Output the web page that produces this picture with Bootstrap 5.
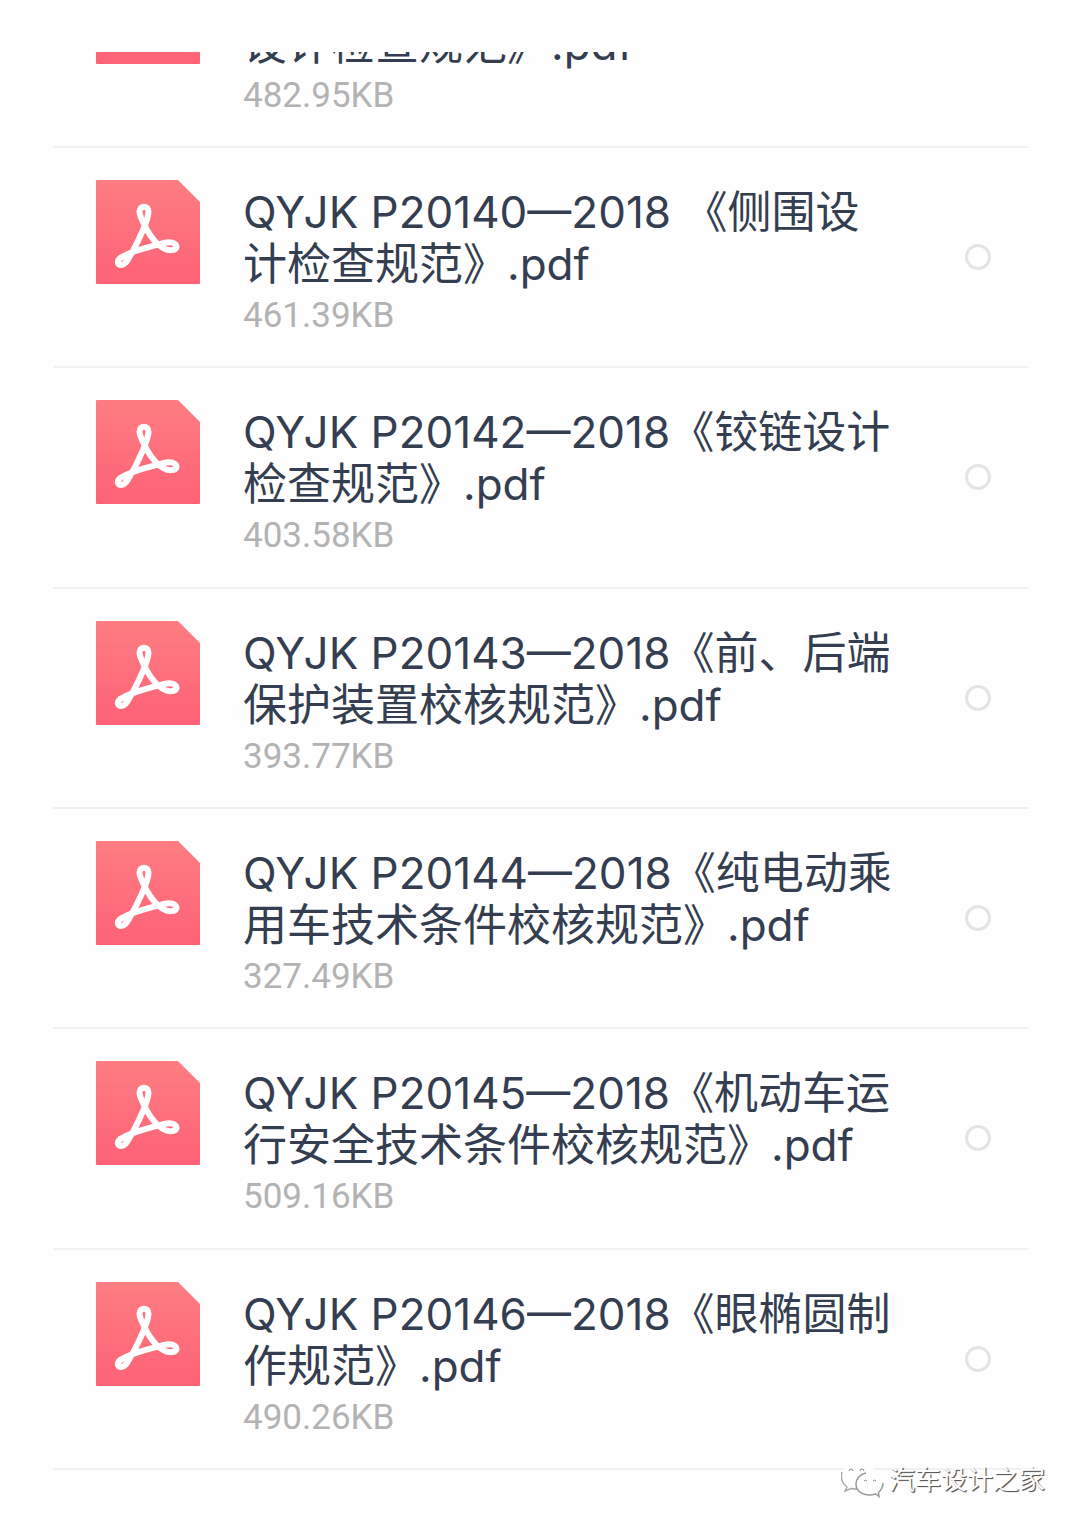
<!DOCTYPE html>
<html lang="zh-CN">
<head>
<meta charset="utf-8">
<meta name="viewport" content="width=device-width, initial-scale=1">
<title>PDF 文件列表</title>
<link rel="stylesheet" href="https://cdn.jsdelivr.net/npm/bootstrap@5.3.0/dist/css/bootstrap.min.css">
<style>
  body { background: #fefefe; font-family: Roboto, "Noto Sans CJK SC", sans-serif; color: #343e50; }
  .page { min-height: 100vh; padding: 52px 52px 57px 53px; }
  .file-row { min-height: 220px; padding: 0 37px 0 43px; border-bottom: 2px solid #f1f1f2; flex: 1 0 220px; }
  .file-peek { height: 96px; overflow: hidden; }
  .file-peek .file-row { flex: none; }
  .file-icon { width: 104px; height: 104px; margin-top: 32px; }
  .file-text { width: 652px; margin: 38px auto 0 43px; }
  .file-title { font-family: Inter, "Noto Sans CJK SC", sans-serif; font-size: 44px; line-height: 52px; min-height: 104px; }
  .file-size { font-size: 35px; line-height: 52px; color: #b3b3b3; }
  .pick { width: 26px; height: 26px; margin: 0; border: 3px solid #e4e4e4; background: #fefefe; }
  .account { right: 35px; bottom: 28px; font-size: 26px; line-height: 38px; color: #fff;
    text-shadow: 1px 1px 1px #555, 1px 1px 0 #888; }
  .account svg { width: 44px; height: 38px; }
</style>
<script src="https://cdn.jsdelivr.net/npm/bootstrap@5.3.0/dist/js/bootstrap.bundle.min.js"></script>
</head>
<body>
<svg class="position-absolute" width="0" height="0" aria-hidden="true">
  <defs>
    <linearGradient id="coral" x1="0" y1="0" x2="0" y2="1"><stop offset="0" stop-color="#fd7d82"/><stop offset="1" stop-color="#fe6276"/></linearGradient>
  </defs>
  <symbol id="pdf" viewBox="0 0 104 104">
    <path d="M1 0H82L104 22V103a1 1 0 0 1-1 1H1a1 1 0 0 1-1-1V1a1 1 0 0 1 1-1Z" fill="url(#coral)"/>
    <path d="M51 50C48 43 43.500 37 43.500 31.500C43.500 25 52.500 25 52.500 31.500C52.500 37 50 43 47 50C43 59 39 68 34 76C31 81 29 85 25.500 85C20.500 85 20.500 80 26 77C38 70 54 67 68 63C75 61 80.500 63 80.500 67C79.500 71 72 71 67 68C60 64 55 57 51 50Z" fill="none" stroke="#fff" stroke-width="6" stroke-linejoin="round"/>
  </symbol>
</svg>
<main class="page position-relative d-flex flex-column">
  <div class="file-peek d-flex flex-column justify-content-end flex-shrink-0">
    <div class="file-row d-flex align-items-start">
      <svg class="file-icon flex-shrink-0" aria-hidden="true"><use href="#pdf"/></svg>
      <div class="file-text"><div class="file-title d-flex align-items-end">设计检查规范》.pdf</div><div class="file-size">482.95KB</div></div>
    </div>
  </div>
  <label class="file-row d-flex align-items-start">
    <svg class="file-icon flex-shrink-0" aria-hidden="true"><use href="#pdf"/></svg>
    <span class="file-text"><span class="file-title d-block">QYJK P20140—2018 《侧围设计检查规范》.pdf</span><span class="file-size d-block">461.39KB</span></span>
    <input class="pick form-check-input flex-shrink-0 align-self-center" type="radio" name="file">
  </label>
  <label class="file-row d-flex align-items-start">
    <svg class="file-icon flex-shrink-0" aria-hidden="true"><use href="#pdf"/></svg>
    <span class="file-text"><span class="file-title d-block">QYJK P20142—2018《铰链设计检查规范》.pdf</span><span class="file-size d-block">403.58KB</span></span>
    <input class="pick form-check-input flex-shrink-0 align-self-center" type="radio" name="file">
  </label>
  <label class="file-row d-flex align-items-start">
    <svg class="file-icon flex-shrink-0" aria-hidden="true"><use href="#pdf"/></svg>
    <span class="file-text"><span class="file-title d-block">QYJK P20143—2018《前、后端保护装置校核规范》.pdf</span><span class="file-size d-block">393.77KB</span></span>
    <input class="pick form-check-input flex-shrink-0 align-self-center" type="radio" name="file">
  </label>
  <label class="file-row d-flex align-items-start">
    <svg class="file-icon flex-shrink-0" aria-hidden="true"><use href="#pdf"/></svg>
    <span class="file-text"><span class="file-title d-block">QYJK P20144—2018《纯电动乘用车技术条件校核规范》.pdf</span><span class="file-size d-block">327.49KB</span></span>
    <input class="pick form-check-input flex-shrink-0 align-self-center" type="radio" name="file">
  </label>
  <label class="file-row d-flex align-items-start">
    <svg class="file-icon flex-shrink-0" aria-hidden="true"><use href="#pdf"/></svg>
    <span class="file-text"><span class="file-title d-block">QYJK P20145—2018《机动车运行安全技术条件校核规范》.pdf</span><span class="file-size d-block">509.16KB</span></span>
    <input class="pick form-check-input flex-shrink-0 align-self-center" type="radio" name="file">
  </label>
  <label class="file-row d-flex align-items-start">
    <svg class="file-icon flex-shrink-0" aria-hidden="true"><use href="#pdf"/></svg>
    <span class="file-text"><span class="file-title d-block">QYJK P20146—2018《眼椭圆制作规范》.pdf</span><span class="file-size d-block">490.26KB</span></span>
    <input class="pick form-check-input flex-shrink-0 align-self-center" type="radio" name="file">
  </label>
  <div class="account position-absolute d-flex align-items-center gap-1">
    <svg viewBox="0 0 44 38" aria-hidden="true">
      <path d="M20 1C9 1 0 7 0 15C0 20 2 23 6 26L4 30L10 27.500C13 28.500 16 28 17 28C16 18 24 12 34 12C32 5 27 1 20 1Z" fill="#fff"/>
      <path d="M1 11C-1 18 2 23 6 26L4 30L10 27.500C12 28 14 28 16 28" fill="none" stroke="#aaa" stroke-width="1.500"/>
      <path d="M29 12C21 12 15 17 15 23C15 30 21 34 29 34C31 34 33 33.500 35 33L38 35.500L37.500 31.500C40 29 42 26 42 23C42 17 36 12 29 12Z" fill="#fff"/>
      <path d="M25 12C19 13 15 18 15 23C15 30 21 34 29 34C31 34 33 33.500 35 33L38 35.500L37.500 31.500C40 29 42 26 42 22" fill="none" stroke="#999" stroke-width="1.500"/>
      <path d="M8 10a2 2 0 0 1 4 0M19 10a2 2 0 0 1 4 0M23 20a2 2 0 0 1 3 0M32 20a2 2 0 0 1 3 0" fill="none" stroke="#888" stroke-width="1"/>
    </svg>
    <span>汽车设计之家</span>
  </div>
</main>
</body>
</html>
